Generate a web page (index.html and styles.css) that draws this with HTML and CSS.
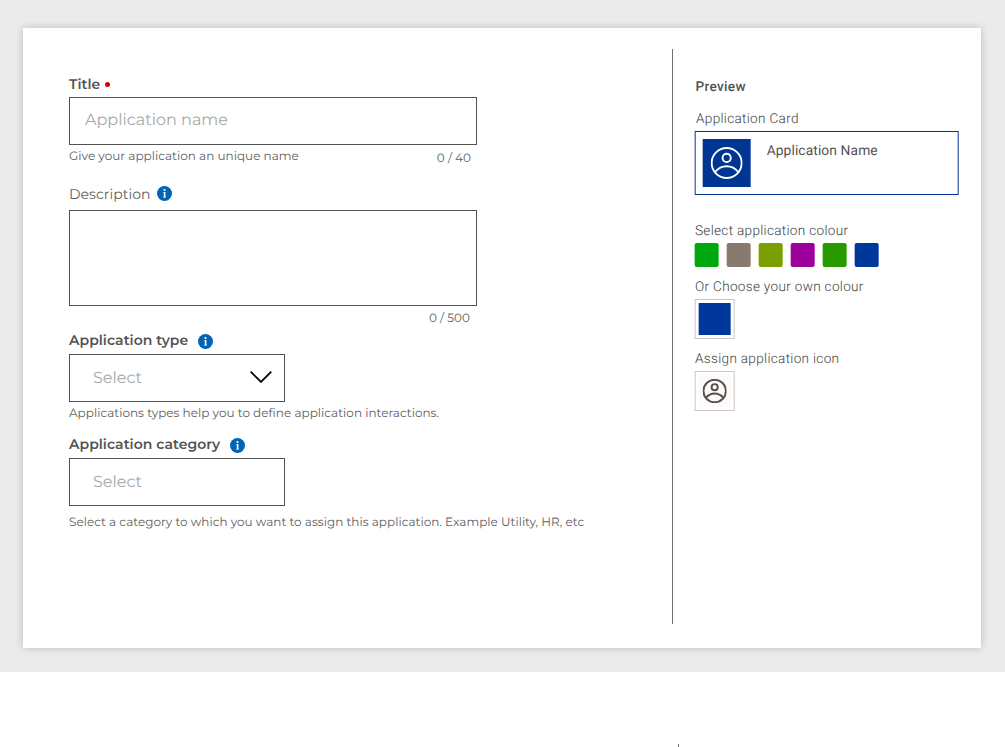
FILE: index.html
```
<!DOCTYPE html>
<html lang="en">
<head>
<meta charset="utf-8">
<title>Application details</title>
<link rel="stylesheet" href="styles.css">
</head>
<body>
<svg width="0" height="0" class="defs">
  <symbol id="user" viewBox="0 0 32 32" fill="none" stroke="currentColor">
    <circle cx="16" cy="16" r="15"/>
    <circle cx="16" cy="10.900" r="4.100"/>
    <path d="M4.500 25C7.500 21.200 11.500 19.300 16 19.300S24.500 21.200 27.500 25"/>
  </symbol>
  <symbol id="info" viewBox="0 0 15 15">
    <circle cx="7.500" cy="7.500" r="7.500" fill="#0064b7"/>
    <circle cx="7.500" cy="4" r="1.100" fill="#fff"/>
    <path d="M6.200 6h2.200v4.700h.6v.7H6.100v-.7h.7V6.700h-.6z" fill="#fff"/>
  </symbol>
</svg>
<main class="page">
  <section class="card">
    <form class="form">
      <div class="field title">
        <div class="label"><span class="t-title">Title</span><i class="required"></i></div>
        <div class="box"><span class="t-name">Application name</span></div>
        <div class="meta"><span class="t-unique">Give your application an unique name</span><span class="count c40">0 / 40</span></div>
      </div>
      <div class="field description">
        <div class="label light"><span class="t-desc">Description</span><svg class="info"><use href="#info"/></svg></div>
        <div class="box area"></div>
        <div class="meta"><span></span><span class="count c500">0 / 500</span></div>
      </div>
      <div class="field type">
        <div class="label"><span class="t-type">Application type</span><svg class="info low"><use href="#info"/></svg></div>
        <div class="box select"><span class="t-select">Select</span>
          <svg class="chevron" viewBox="0 0 22 12"><path d="M.7.700 11 10.900 21.300.700" fill="none" stroke="#000" stroke-width="1.800"/></svg>
        </div>
        <div class="meta"><span class="t-help">Applications types help you to define application interactions.</span></div>
      </div>
      <div class="field category">
        <div class="label"><span class="t-cat">Application category</span><svg class="info low"><use href="#info"/></svg></div>
        <div class="box select"><span class="t-select">Select</span></div>
        <div class="meta last"><span class="t-assign">Select a category to which you want to assign this application. Example Utility, HR, etc</span></div>
      </div>
    </form>
    <aside class="preview">
      <h2 class="heading">Preview</h2>
      <div class="caption cap-card">Application Card</div>
      <div class="app-card"><div class="tile"><svg class="user"><use href="#user"/></svg></div><span class="app-name">Application Name</span></div>
      <div class="caption cap-colour">Select application colour</div>
      <div class="swatches"><i class="green"></i><i class="taupe"></i><i class="olive"></i><i class="purple"></i><i class="leaf"></i><i class="blue"></i></div>
      <div class="caption cap-own">Or Choose your own colour</div>
      <div class="picker"><i class="chosen"></i></div>
      <div class="caption cap-icon">Assign application icon</div>
      <div class="picker"><div class="icon-bg"><svg class="user small"><use href="#user"/></svg></div></div>
    </aside>
  </section>
</main>
<div class="tick"></div>
</body>
</html>
```
FILE: styles.css
```
* { box-sizing: border-box; }
body { margin: 0; width: 1005px; height: 747px; overflow: hidden; background: #fff; color: #535353; display: flex; flex-direction: column; justify-content: space-between; font-family: Montserrat, Inter, sans-serif; text-rendering: geometricPrecision; }
.defs { position: absolute; }
.page { height: 672px; background: #ebebeb; padding: 28px 24px 24px 23px; }
.card { height: 620px; background: #fff; box-shadow: 0 0 8px rgba(0, 0, 0, .2); display: flex; padding: 21px 22px 24px 46px; }
.form { width: 603px; padding-top: 25px; }
.field { white-space: nowrap; }
.label { height: 20px; line-height: 20px; display: flex; align-items: center; font-size: 14px; font-weight: 600; margin-bottom: 4px; letter-spacing: .03px; }
.title .label { margin-bottom: 3px; }
.description { margin-top: 17px; }
.description .label { margin-bottom: 6px; }
.type { margin-top: 2px; }
.category { margin-top: 10px; }
.light { font-weight: 400; color: #606060; }
.required { width: 5px; height: 5px; border-radius: 50%; background: #d00000; margin-left: 5px; margin-top: 1px; }
.info { width: 15px; height: 15px; margin: 0 0 1px 7px; }
.low { margin: 3px 0 0 10px; }
.box { width: 408px; height: 48px; border: 1px solid #535353; padding: 0 15px 1px; display: flex; align-items: center; color: #a8a8a8; font-size: 16px; font-weight: 400; }
.area { height: 96px; }
.select { width: 216px; padding: 0 12px 0 23px; justify-content: space-between; }
.chevron { width: 22px; height: 12px; margin-bottom: 2px; }
.meta { height: 22px; line-height: 24px; width: 402px; display: flex; justify-content: space-between; font-size: 12px; letter-spacing: .02px; color: #606060; }
.count { line-height: 27px; }
.c500 { line-height: 25px; margin-right: 1px; }
.last { margin-top: 5px; }
.t-title { width: 31px; }
.t-desc { width: 81px; }
.t-type { width: 119px; }
.t-cat { width: 151px; }
.preview { border-left: 1px solid #6f6f6f; padding: 29px 0 0 22px; width: 287px; font-family: Roboto, sans-serif; font-size: 14px; }
.heading { margin: 0 0 12px .6px; height: 19px; line-height: 19px; font-size: 13.600px; font-weight: 500; letter-spacing: .3px; }
.caption { height: 20px; line-height: 20px; margin-bottom: 3px; font-size: 13.600px; font-weight: 300; letter-spacing: .3px; white-space: nowrap; color: #424242; }
.cap-card { padding-left: 1px; margin-bottom: 2px; }
.cap-colour, .cap-own, .cap-icon { padding-top: 1px; }
.app-card { width: 264px; height: 64px; border: 1px solid #003594; padding: 7px 7px; display: flex; margin-bottom: 25px; }
.app-card, .swatches, .picker { transform: translateX(-.33px); }
.tile { width: 48px; height: 48px; background: #003594; color: #fff; display: flex; align-items: center; justify-content: center; }
.user { width: 32px; height: 32px; stroke-width: 1.900; overflow: visible; }
.small { width: 24px; height: 24px; stroke-width: 2.600; }
.app-name { margin: 2px 0 0 16px; line-height: 20px; font-size: 13.800px; letter-spacing: .1px; }
.swatches { display: flex; gap: 8px; height: 24px; margin-bottom: 9px; }
.swatches i { width: 24px; border-radius: 2px; }
.green { background: #00a80f; }
.taupe { background: #887b6e; }
.olive { background: #7b9f00; }
.purple { background: #9d009d; }
.leaf { background: #289a00; }
.blue, .chosen { background: #00379b; }
.picker { width: 40px; height: 40px; border: 1px solid #c8c8c8; padding: 3px; margin-bottom: 9px; }
.chosen { display: block; width: 32px; height: 32px; }
.icon-bg { width: 32px; height: 32px; background: #fffaf7; display: flex; align-items: center; justify-content: center; }
.tick { width: 1px; height: 3px; margin-left: 678px; background: #6f6f6f; }
```
